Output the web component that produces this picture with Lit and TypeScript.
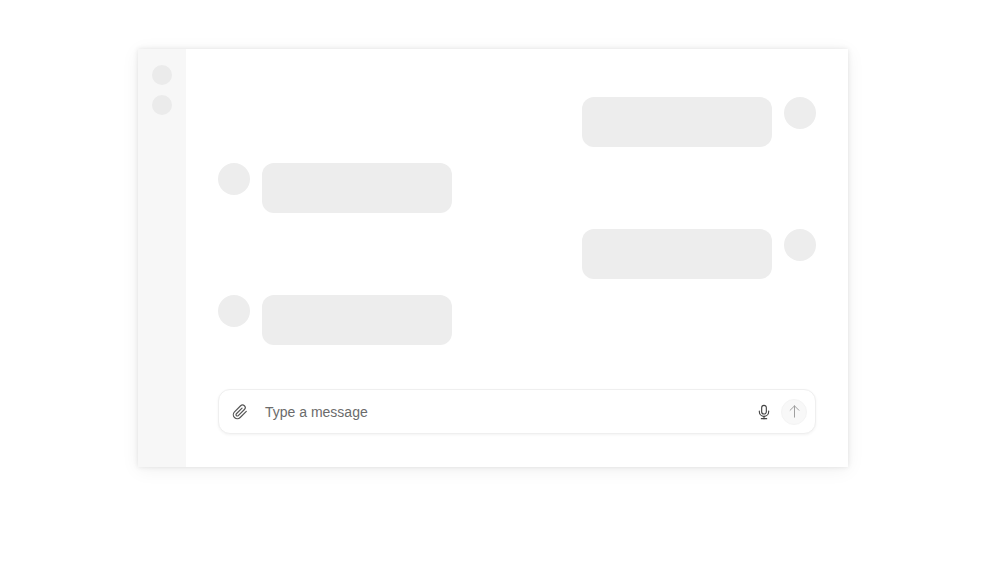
import { LitElement, html, css } from "lit";
import { customElement } from "lit/decorators.js";

@customElement("app-root")
export class AppRoot extends LitElement {
  static styles = css`
    :host { display: block; height: 563px; background: #fff; font-family: "Liberation Sans", Arial, sans-serif; }
    .page { padding: 49px 0 0 138px; }
    .frame { width: 710px; height: 418px; display: flex; background: #fff; box-shadow: 0 0 5px rgba(0,0,0,.1), 0 3px 18px rgba(0,0,0,.06); }
    .side { width: 48px; flex: none; background: #f7f7f7; display: flex; flex-direction: column; align-items: center; gap: 10px; padding-top: 16px; box-sizing: border-box; }
    .dot { width: 20px; height: 20px; border-radius: 50%; background: #ebebeb; }
    .main { flex: 1; display: flex; flex-direction: column; padding: 48px 32px 33px; box-sizing: border-box; }
    .msgs { flex: 1; display: flex; flex-direction: column; gap: 16px; }
    .row { display: flex; gap: 12px; align-items: flex-start; }
    .row.me { justify-content: flex-end; }
    .av { width: 32px; height: 32px; border-radius: 50%; background: #ededed; }
    .bub { width: 190px; height: 50px; border-radius: 12px; background: #ededed; }
    .input { height: 45px; box-sizing: border-box; border: 1px solid #efefef; border-radius: 12px; box-shadow: 0 1px 3px rgba(0,0,0,.05); display: flex; align-items: center; padding: 0 8px 0 13px; background: #fff; }
    .clip { width: 16px; height: 16px; color: #555; flex: none; stroke-width: 1.8; }
    .ph { margin-left: 17px; flex: 1; font-size: 14px; color: #6b6b6b; }
    .mic { width: 16px; height: 16px; color: #444; flex: none; margin-right: 9px; stroke-width: 1.7; }
    .send { width: 26px; height: 26px; border-radius: 50%; background: #f8f8f8; border: 1px solid #f4f4f4; box-sizing: border-box; display: flex; align-items: center; justify-content: center; color: #999; }
    .send svg { width: 15px; height: 15px; }
    svg { display: block; fill: none; stroke: currentColor; stroke-width: 1.5; stroke-linecap: round; stroke-linejoin: round; }
  `;
  render() {
    const me = html`<div class="row me"><div class="bub"></div><div class="av"></div></div>`;
    const other = html`<div class="row"><div class="av"></div><div class="bub"></div></div>`;
    return html`<div class="page"><div class="frame">
      <div class="side"><div class="dot"></div><div class="dot"></div></div>
      <div class="main">
        <div class="msgs">${me}${other}${me}${other}</div>
        <div class="input">
          <svg class="clip" viewBox="0 0 24 24"><path d="M21.44 11.05l-9.19 9.19a6 6 0 0 1-8.49-8.49l9.19-9.19a4 4 0 0 1 5.66 5.66l-9.2 9.19a2 2 0 0 1-2.83-2.83l8.49-8.48"/></svg>
          <div class="ph">Type a message</div>
          <svg class="mic" viewBox="0 0 24 24"><path d="M12 2a3.5 3.5 0 0 0-3.5 3.5v6a3.5 3.5 0 0 0 7 0v-6A3.5 3.5 0 0 0 12 2z"/><path d="M5 10.5v1a7 7 0 0 0 14 0v-1"/><path d="M12 18.5V22"/><path d="M8 22h8"/></svg>
          <div class="send"><svg viewBox="0 0 24 24"><path d="M12 21V3"/><path d="M5 10l7-7 7 7"/></svg></div>
        </div>
      </div>
    </div></div>`;
  }
}
